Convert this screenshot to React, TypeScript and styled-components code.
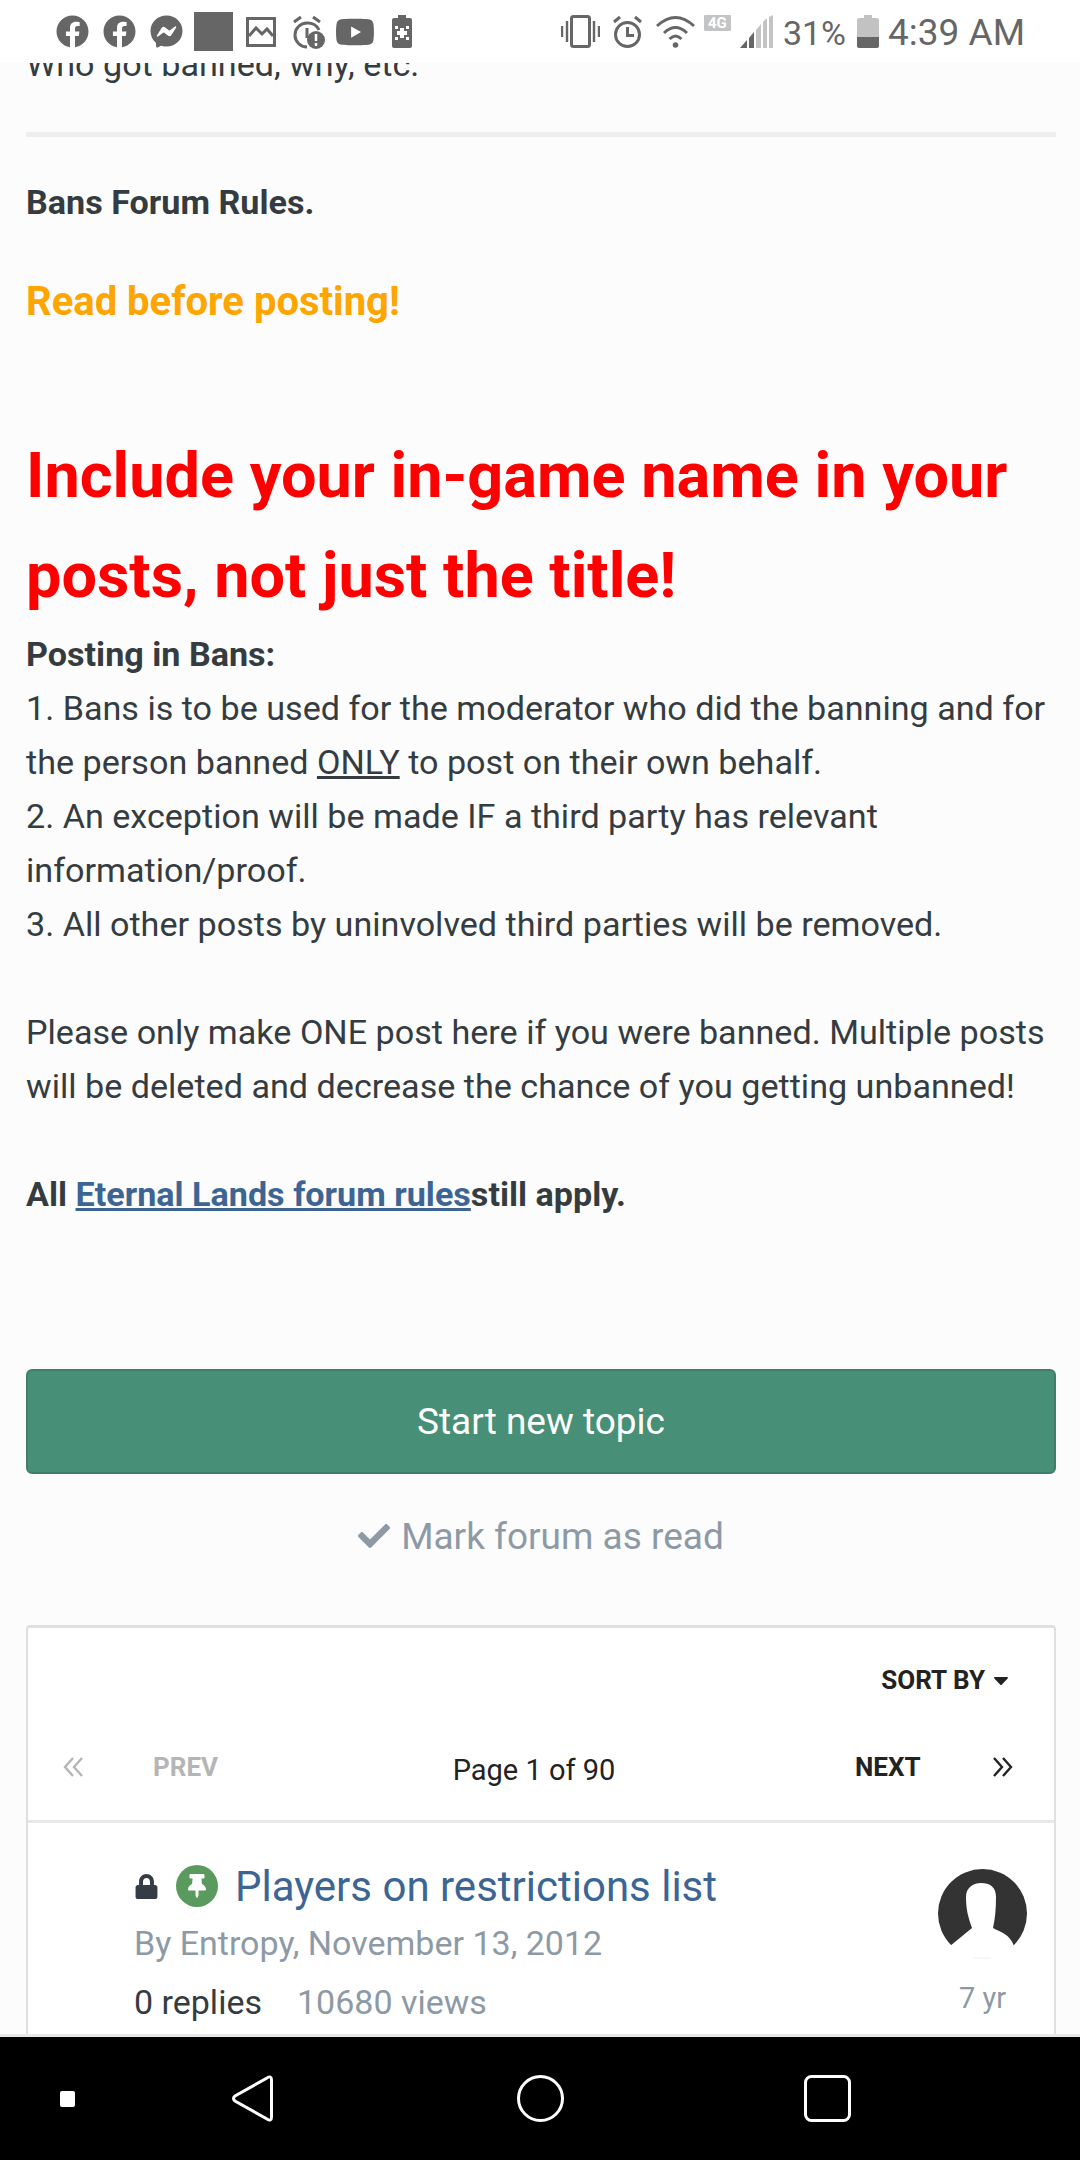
import React from 'react';
import styled, { createGlobalStyle } from 'styled-components';
import {
  FaFacebook,
  FaFacebookMessenger,
  FaYoutube,
  FaCheck,
  FaLock,
  FaThumbtack,
  FaCaretDown,
} from 'react-icons/fa';

const GlobalStyle = createGlobalStyle`
  html, body {
    margin: 0;
    padding: 0;
    background: #fcfcfc;
    font-family: Roboto, "Liberation Sans", sans-serif;
  }
`;

const DoubleChevron = ({ flip }: { flip?: boolean }) => (
  <svg width="21" height="20" viewBox="0 0 21 20" style={flip ? { transform: 'scaleX(-1)' } : undefined}>
    <path d="M10 1 L2 10 L10 19 M19 1 L11 10 L19 19" fill="none" stroke="currentColor" strokeWidth="2.4" />
  </svg>
);

const App = () => {
  return (
    <Page>
      <GlobalStyle />
      <StatusBar>
        <IconGroup>
          <FaFacebook size={33} />
          <Slot $left={14}>
            <FaFacebook size={33} />
          </Slot>
          <Slot $left={14}>
            <FaFacebookMessenger size={33} />
          </Slot>
          <GreySquare />
          <Slot $left={13}>
            <svg width="30" height="30" viewBox="0 0 30 30">
              <rect x="1.5" y="1.5" width="27" height="27" fill="none" stroke="#666" strokeWidth="3" />
              <path d="M3 19 L10 11 L16 17 L21 12 L27 19" fill="none" stroke="#666" strokeWidth="3" />
            </svg>
          </Slot>
          <Slot $left={17}>
            <svg width="32" height="34" viewBox="0 0 32 34">
              <path d="M14 8 A12 12 0 1 0 14 32" fill="none" stroke="#666" strokeWidth="3" />
              <path d="M14 8 A12 12 0 0 1 26 15" fill="none" stroke="#666" strokeWidth="3" />
              <path d="M1 7 L8 2 M20 2 L27 7" stroke="#666" strokeWidth="3" />
              <path d="M14 13 V23" stroke="#666" strokeWidth="3" />
              <circle cx="23" cy="25" r="9" fill="#666" />
              <path d="M23 19 V26 M23 28 V31" stroke="#fff" strokeWidth="2.5" />
            </svg>
          </Slot>
          <Slot $left={10}>
            <FaYoutube size={40} />
          </Slot>
          <Slot $left={17}>
            <svg width="20" height="33" viewBox="0 0 20 33">
              <path d="M6 0 H14 V3 H18 Q20 3 20 5 V31 Q20 33 18 33 H2 Q0 33 0 31 V5 Q0 3 2 3 H6 Z" fill="#666" />
              <path d="M8 13 H12 V16 H15 V20 H12 V23 H8 V20 H5 V16 H8 Z" fill="#fff" />
              <path d="M3 11 H6 V14 H3 Z M14 11 H17 V14 H14 Z M3 22 H6 V25 H3 Z M14 22 H17 V25 H14 Z" fill="#fff" />
            </svg>
          </Slot>
        </IconGroup>
        <IconGroup>
          <svg width="39" height="33" viewBox="0 0 39 33">
            <rect x="10.5" y="1.5" width="18" height="30" rx="2" fill="none" stroke="#666" strokeWidth="3" />
            <path d="M1 11 V22 M6 6 V27 M33 6 V27 M38 11 V22" stroke="#666" strokeWidth="2.4" />
          </svg>
          <Slot $left={13}>
            <svg width="29" height="33" viewBox="0 0 29 33">
              <circle cx="14.5" cy="19.5" r="12" fill="none" stroke="#666" strokeWidth="3" />
              <path d="M1 7 L7 2 M22 2 L28 7" stroke="#666" strokeWidth="3" />
              <path d="M14.5 12 V20.5 H21" fill="none" stroke="#666" strokeWidth="3" />
            </svg>
          </Slot>
          <Slot $left={14}>
            <svg width="39" height="33" viewBox="0 0 39 33">
              <path d="M1 11 Q19.5 -6 38 11 M8 18 Q19.5 7 31 18 M13.5 24 Q19.5 18 25.5 24" fill="none" stroke="#666" strokeWidth="3" />
              <circle cx="19.5" cy="30" r="2.8" fill="#666" />
            </svg>
          </Slot>
          <Slot $left={9}>
            <NetworkBadge>4G</NetworkBadge>
          </Slot>
          <Slot $left={9}>
            <svg width="33" height="33" viewBox="0 0 33 33">
              <path d="M0 33 L7 25 V33 Z" fill="#666" />
              <path d="M9 23 L14 17 V33 H9 Z" fill="#666" />
              <path d="M16 15 L21 9 V33 H16 Z M23 7 L27 3 V33 H23 Z M29 2 L33 0 V33 H29 Z" fill="#c4c4c4" />
            </svg>
          </Slot>
          <BatteryText>31%</BatteryText>
          <Slot $left={11}>
            <svg width="22" height="33" viewBox="0 0 22 33">
              <path d="M7 0 H15 V3 H20 Q22 3 22 5 V22 H0 V5 Q0 3 2 3 H7 Z" fill="#c2c2c2" />
              <path d="M0 22 H22 V31 Q22 33 20 33 H2 Q0 33 0 31 Z" fill="#666" />
            </svg>
          </Slot>
          <ClockText>4:39 AM</ClockText>
        </IconGroup>
      </StatusBar>

      <Main>
        <ClippedLine>Who got banned, why, etc.</ClippedLine>
        <Rule />
        <BoldPlain>Bans Forum Rules.</BoldPlain>
        <OrangeLine>Read before posting!</OrangeLine>
        <RedHeading>Include your in-game name in your posts, not just the title!</RedHeading>
        <BoldPlain>Posting in Bans:</BoldPlain>
        <Line>1. Bans is to be used for the moderator who did the banning and for</Line>
        <Line>
          the person banned <u>ONLY</u> to post on their own behalf.
        </Line>
        <Line>2. An exception will be made IF a third party has relevant</Line>
        <Line>information/proof.</Line>
        <Line>3. All other posts by uninvolved third parties will be removed.</Line>
        <Spacer />
        <Line>Please only make ONE post here if you were banned. Multiple posts</Line>
        <Line>will be deleted and decrease the chance of you getting unbanned!</Line>
        <Spacer />
        <BoldPlain>
          All <ForumLink>Eternal Lands forum rules</ForumLink>still apply.
        </BoldPlain>

        <StartButton>Start new topic</StartButton>
        <MarkRead>
          <FaCheck size={32} />
          Mark forum as read
        </MarkRead>

        <TopicBox>
          <SortRow>
            <SortLabel>
              SORT BY
              <FaCaretDown size={24} />
            </SortLabel>
          </SortRow>
          <PagerRow>
            <PagerSide>
              <PagerIcon $muted>
                <DoubleChevron />
              </PagerIcon>
              <PagerLabel $muted>PREV</PagerLabel>
            </PagerSide>
            <PageCount>Page 1 of 90</PageCount>
            <PagerSide>
              <PagerLabel>NEXT</PagerLabel>
              <PagerIcon>
                <DoubleChevron flip />
              </PagerIcon>
            </PagerSide>
          </PagerRow>
          <TopicRow>
            <TopicMain>
              <TitleRow>
                <FaLock size={25} color="#353c46" />
                <PinBadge>
                  <FaThumbtack size={24} color="#fff" />
                </PinBadge>
                <TopicTitle>Players on restrictions list</TopicTitle>
              </TitleRow>
              <Byline>By Entropy, November 13, 2012</Byline>
              <Stats>
                <Replies>0 replies</Replies>
                <Views>10680 views</Views>
              </Stats>
            </TopicMain>
            <TopicAside>
              <svg width="89" height="90" viewBox="0 0 89 90">
                <circle cx="44.5" cy="44.5" r="44.5" fill="#333" />
                <path d="M0 77 H12 L34 59 C30 48 28 40 28 28 C28 18 36 14 43 14 C52 14 58 18 58 28 C58 40 57 50 55 59 C62 63 72 65 76 77 H89 V90 H0 Z" fill="#fff" />
                <path d="M35 89 H53" stroke="#eee" strokeWidth="1" />
              </svg>
              <Age>7 yr</Age>
            </TopicAside>
          </TopicRow>
        </TopicBox>
      </Main>

      <NavBar>
        <NavDot />
        <svg width="42" height="47" viewBox="0 0 42 47">
          <path d="M39.5 5 Q39.5 0 35 3 L3 21 Q0 23.5 3 26 L35 44 Q39.5 47 39.5 42 Z" fill="none" stroke="#fff" strokeWidth="3" />
        </svg>
        <svg width="47" height="47" viewBox="0 0 47 47">
          <circle cx="23.5" cy="23.5" r="22" fill="none" stroke="#fff" strokeWidth="3" />
        </svg>
        <svg width="47" height="47" viewBox="0 0 47 47">
          <rect x="1.5" y="1.5" width="44" height="44" rx="6" fill="none" stroke="#fff" strokeWidth="3" />
        </svg>
      </NavBar>
    </Page>
  );
};

const Page = styled.div`
  width: 1080px;
  height: 2160px;
  display: flex;
  flex-direction: column;
  overflow: hidden;
  background: #fcfcfc;
  color: #353c41;
`;

const StatusBar = styled.div`
  position: relative;
  z-index: 1;
  flex: none;
  height: 63px;
  background: #fff;
  display: flex;
  justify-content: space-between;
  align-items: center;
  padding: 0 55px 0 56px;
  color: #666;
`;

const IconGroup = styled.div`
  display: flex;
  align-items: center;
`;

const Slot = styled.span<{ $left: number }>`
  display: flex;
  margin-left: ${(p) => p.$left}px;
`;

const GreySquare = styled.div`
  width: 39px;
  height: 39px;
  margin-left: 11px;
  background: #666;
`;

const NetworkBadge = styled.span`
  width: 27px;
  height: 16px;
  margin-bottom: 17px;
  background: #c4c4c4;
  color: #fff;
  font-size: 15px;
  font-weight: 700;
  line-height: 16px;
  text-align: center;
  border-radius: 1px;
`;

const BatteryText = styled.span`
  margin-left: 10px;
  padding-top: 2px;
  font-size: 34px;
`;

const ClockText = styled.span`
  margin-left: 9px;
  padding-top: 2px;
  font-size: 37px;
`;

const Main = styled.div`
  flex: 1;
  min-height: 0;
  overflow: hidden;
  padding: 0 24px 0 26px;
`;

const Line = styled.div`
  font-size: 34.13px;
  line-height: 54px;
  white-space: nowrap;
`;

const ClippedLine = styled(Line)`
  margin-top: -26px;
`;

const Rule = styled.hr`
  height: 5px;
  margin: 41px 0 38px;
  border: 0;
  background: #eee;
`;

const BoldPlain = styled(Line)`
  font-weight: 700;
`;

const OrangeLine = styled.div`
  margin-top: 46px;
  font-size: 40px;
  line-height: 54px;
  font-weight: 700;
  color: #ffa500;
`;

const RedHeading = styled.h2`
  margin: 97px 0 1px;
  font-size: 63px;
  line-height: 100px;
  font-weight: 700;
  color: #f00;
`;

const Spacer = styled.div`
  height: 54px;
`;

const ForumLink = styled.span`
  color: #3d6594;
  text-decoration: underline;
`;

const StartButton = styled.div`
  box-sizing: border-box;
  height: 105px;
  margin-top: 148px;
  display: flex;
  align-items: center;
  justify-content: center;
  background: #478f76;
  border: 2px solid #417e69;
  border-radius: 6px;
  color: #fff;
  font-size: 37px;
`;

const MarkRead = styled.div`
  margin-top: 35px;
  display: flex;
  align-items: center;
  justify-content: center;
  gap: 11px;
  height: 54px;
  color: #8d9aa6;
  font-size: 37px;
`;

const TopicBox = styled.div`
  box-sizing: border-box;
  margin-top: 62px;
  background: #fff;
  border: 2px solid #e0e0e0;
  border-top-width: 3px;
  border-radius: 4px;
  height: 500px;
`;

const SortRow = styled.div`
  height: 103px;
  display: flex;
  justify-content: flex-end;
  align-items: center;
  padding-right: 41px;
`;

const SortLabel = styled.div`
  display: flex;
  align-items: center;
  gap: 4px;
  font-size: 26px;
  font-weight: 700;
  color: #222;
`;

const PagerRow = styled.div`
  height: 72px;
  display: grid;
  grid-template-columns: 1fr auto 1fr;
  align-items: center;
  padding: 0 41px 17px 35px;
  border-bottom: 3px solid #e8e8e8;
`;

const PagerSide = styled.div`
  display: flex;
  align-items: center;
  justify-content: space-between;
  &:first-child {
    width: 155px;
  }
  &:last-child {
    width: 158px;
    margin-left: auto;
  }
`;

const PagerIcon = styled.span<{ $muted?: boolean }>`
  display: flex;
  color: ${(p) => (p.$muted ? '#b5b5b5' : '#222')};
`;

const PagerLabel = styled.span<{ $muted?: boolean }>`
  font-size: 26px;
  font-weight: 700;
  color: ${(p) => (p.$muted ? '#b5b5b5' : '#222')};
`;

const PageCount = styled.span`
  font-size: 29px;
  color: #222;
  padding: 6px 8px 0 0;
`;

const TopicRow = styled.div`
  display: flex;
  justify-content: space-between;
  padding: 42px 27px 0 106px;
`;

const TopicMain = styled.div`
  display: flex;
  flex-direction: column;
`;

const TitleRow = styled.div`
  display: flex;
  align-items: center;
  gap: 17px;
  height: 42px;
`;

const PinBadge = styled.span`
  width: 42px;
  height: 42px;
  border-radius: 50%;
  background: #5a9a5e;
  display: flex;
  align-items: center;
  justify-content: center;
`;

const TopicTitle = styled.span`
  font-size: 42px;
  color: #3d6594;
`;

const Byline = styled.div`
  margin-top: 16px;
  font-size: 34px;
  line-height: 40px;
  color: #8d9aa6;
`;

const Stats = styled.div`
  margin-top: 18px;
  display: flex;
  gap: 35px;
  font-size: 34px;
  line-height: 42px;
`;

const Replies = styled.span`
  color: #353c41;
`;

const Views = styled.span`
  color: #8d9aa6;
`;

const TopicAside = styled.div`
  display: flex;
  flex-direction: column;
  align-items: center;
  margin-top: 4px;
`;

const Age = styled.div`
  margin-top: 21px;
  font-size: 29px;
  line-height: 36px;
  color: #8d9aa6;
`;

const NavBar = styled.div`
  flex: none;
  height: 123px;
  border-top: 3px solid #e8e8e8;
  background: #000;
  display: grid;
  grid-template-columns: 135px 235px 340px 235px;
  align-items: center;
  justify-items: center;
`;

const NavDot = styled.div`
  width: 15px;
  height: 16px;
  border-radius: 2px;
  background: #fff;
`;

export default App;
